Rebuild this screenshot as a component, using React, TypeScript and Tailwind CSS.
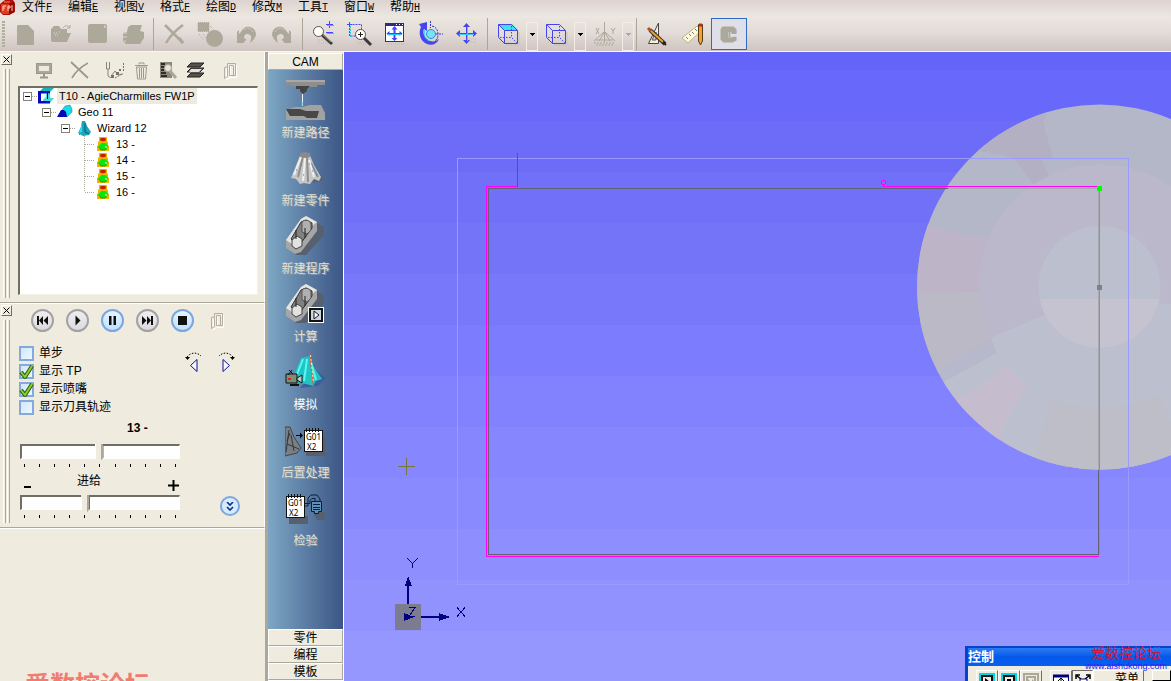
import React from "react";

type IconProps = { children: React.ReactNode };

const GREY = "#ada99a";

function ToolIcon({ children }: IconProps) {
  return (
    <svg width="36" height="32" viewBox="0 0 36 32" fill="none" aria-hidden="true">
      {children}
    </svg>
  );
}

function ToolButton({ label, active, children }: IconProps & { label: string; active?: boolean }) {
  return (
    <button
      type="button"
      aria-label={label}
      className={
        active
          ? "flex h-8 w-9 items-center justify-center border border-[#316ac5] bg-[#dedfe8]"
          : "flex h-8 w-9 items-center justify-center"
      }
    >
      <ToolIcon>{children}</ToolIcon>
    </button>
  );
}

function DropArrow({ label, disabled }: { label: string; disabled?: boolean }) {
  return (
    <button
      type="button"
      aria-label={label}
      className="flex h-[29px] w-3 items-center justify-center self-end border border-[#f3eee4] pb-1"
    >
      <svg width="5" height="3" viewBox="0 0 5 3" shapeRendering="crispEdges" aria-hidden="true">
        <path d="M0 0h5v1H4v1H3v1H2V2H1V1H0z" fill={disabled ? GREY : "#000"} />
      </svg>
    </button>
  );
}

function Separator() {
  return <div className="mx-0.5 h-8 w-px shrink-0 bg-[#aaa698]" />;
}

const menus = [
  ["文件", "F"],
  ["编辑", "E"],
  ["视图", "V"],
  ["格式", "F"],
  ["绘图", "D"],
  ["修改", "M"],
  ["工具", "T"],
  ["窗口", "W"],
  ["帮助", "H"],
];

function MenuBar() {
  return (
    <nav className="flex h-4 shrink-0 items-start overflow-hidden bg-linear-to-b from-[#ddd3d0] to-[#ebe6df]">
      <svg width="22" height="16" viewBox="0 0 22 16" className="shrink-0" aria-hidden="true">
        <path d="M0 4 5 0h8l2 3v9l-6 3H3L0 12z" fill="#b01208" />
        <path d="M1 4h8v10H3l-2-2z" fill="#e13a22" />
        <path d="M9 4l5-2v10l-5 3z" fill="#8c0a05" />
        <path d="M3 11V6h3M3 8h2M8 11V6h2v2H8M12 5v6" stroke="#ffd2c0" fill="none" />
        <path d="M4 2h6" stroke="#ff8060" />
      </svg>
      {menus.map(([name, key]) => (
        <button key={name} type="button" className="flex w-[46px] items-center text-xs leading-[15px]">
          {name}
          <span className="font-['Liberation_Mono'] text-[10px] underline">{key}</span>
        </button>
      ))}
    </nav>
  );
}

function CubeLines() {
  return (
    <>
      <path d="M8.500 6.500h13l6 6h-13zM8.500 6.500v13l6 6h13v-13M14.500 12.500v13" stroke="#4646e8" />
      <path d="M21.500 8v11M10 19.500h11M22 20l5 5" stroke="#4646e8" strokeDasharray="1.500 1.500" />
      <path d="M16 27h13V14" stroke="#c9c2c0" />
    </>
  );
}

function FourArrows() {
  return (
    <path
      d="M17.500 5l3.500 4h-3v6h6v-3l4 3.500-4 3.500v-3h-6v6h3l-3.500 4-3.500-4h3v-6h-6v3l-4-3.500 4-3.500v3h6V9h-3z"
      fill="#4646f0"
    />
  );
}

function ToolBar() {
  return (
    <div
      role="toolbar"
      className="flex h-9 shrink-0 items-center overflow-hidden border-b border-[#f8f6f0] bg-linear-to-b from-[#ece7e0] via-[#e2dbd8] to-[#cfc4c0]"
    >
      <div className="mr-0.5 ml-0.5 h-[26px] w-[3px] bg-[repeating-linear-gradient(to_bottom,#aeb09a_0_2px,transparent_2px_3px)]" />
      <ToolButton label="新建">
        <path d="M10 8l1-1h10l6 6v14H10z" fill={GREY} />
      </ToolButton>
      <ToolButton label="打开">
        <path d="M8 23V11l3-3h5l2 3h6v4h4l-4 9H10z" fill={GREY} />
        <path d="M20 10c2-3 5-3 7 0m0-3v3h-3" stroke={GREY} />
        <path d="M11 15h3m2-1h2m-6 3h3" stroke="#e0dad4" strokeDasharray="1 1" />
      </ToolButton>
      <ToolButton label="保存">
        <rect x="9" y="6" width="19" height="19" rx="2" fill={GREY} />
        <path d="M25 8h1v2" stroke="#e6e0da" />
      </ToolButton>
      <ToolButton label="打印">
        <path d="M13 9l3-2h11l-2 6 4 1v6l-4 6H11l-3-3v-8l4-1z" fill={GREY} />
        <path d="M8 15h4m-4 4h4m-3 4h2" stroke="#d8d2cb" />
      </ToolButton>
      <Separator />
      <ToolButton label="删除">
        <path d="M9 7l18 18M27 7C20 12 14 18 10 25" stroke={GREY} strokeWidth="2.500" />
        <path d="M23 20l4 5" stroke={GREY} strokeWidth="3" />
      </ToolButton>
      <ToolButton label="对象">
        <rect x="6" y="4.500" width="11" height="9" fill={GREY} stroke={GREY} strokeDasharray="1 1" />
        <circle cx="22.500" cy="20.500" r="8.500" fill={GREY} />
        <path d="M7 16l5 6M11 16l4 5M18 8l4 4" stroke={GREY} strokeDasharray="1 1" />
      </ToolButton>
      <ToolButton label="撤消">
        <path d="M9 14l2-2v4l2-2c2-4 5-6 9-5 4 1 6 4 6 8-1 3-3 6-6 8 1-4 2-6 0-8-3-2-6-1-6 3l2 1v1l-2 2v1H9z" fill={GREY} />
        <path d="M16 12c3-3 7-2 9 2M22 18l-2 7" stroke="#ddd6d0" strokeDasharray="1 1" />
      </ToolButton>
      <ToolButton label="重做">
        <path d="M27 14l-2-2v4l-2-2c-2-4-5-6-9-5-4 1-6 4-6 8 1 3 3 6 6 8-1-4-2-6 0-8 3-2 6-1 6 3l-2 1v1l2 2v1h7z" fill={GREY} />
        <path d="M20 12c-3-3-7-2-9 2M14 18l2 7" stroke="#ddd6d0" strokeDasharray="1 1" />
      </ToolButton>
      <Separator />
      <ToolButton label="缩放">
        <path d="M12 22h9M14 25h10" stroke="#bdb5b2" strokeDasharray="1 1" />
        <path d="M17 17l10 9" stroke="#3a3a3a" strokeWidth="3" />
        <path d="M17 16l9 8" stroke="#b08a60" />
        <circle cx="13.500" cy="13.500" r="5" fill="#fffff4" stroke="#555" />
        <path d="M21 6.500h7M24.500 3v7M21 14.500h7" stroke="#4646ff" />
        <path d="M22 7.500h7M22 15.500h7" stroke="#20c8ff" />
      </ToolButton>
      <ToolButton label="窗口缩放">
        <path d="M8.500 6.500h12v5M8.500 7v11h6" stroke="#4646ff" strokeDasharray="2 1" />
        <path d="M9.500 8v11" stroke="#20c8ff" strokeDasharray="2 1" />
        <path d="M6 6.500h5M8.500 4v5" stroke="#4646ff" />
        <path d="M23 20l7 7" stroke="#3a3a3a" strokeWidth="3" />
        <circle cx="19.500" cy="16.500" r="5" fill="#fffff4" stroke="#555" />
        <path d="M17 16.500h5M19.500 14v5" stroke="#222" />
        <path d="M15 24h9M18 26h8" stroke="#bdb5b2" strokeDasharray="1 1" />
      </ToolButton>
      <ToolButton label="全部显示">
        <rect x="8.500" y="5.500" width="18" height="18" fill="#fff" stroke="#2d2d88" />
        <path d="M8 6.500h19" stroke="#2d2d88" strokeWidth="3" />
        <path d="M19 6.500h7" stroke="#fff" strokeDasharray="1 2" />
        <path d="M17.500 8l3 3.500h-2V15h4v-2l3 2.500-3 2.500v-2h-4v4h2l-3 3-3-3h2v-4h-4v2l-3-2.500 3-2.500v2h4v-3.500h-2z" fill="#4646f0" />
        <path d="M10 16.500h15" stroke="#20c8ff" />
        <path d="M10 26h18" stroke="#bdb5b2" strokeDasharray="1 1" />
      </ToolButton>
      <ToolButton label="旋转">
        <path d="M6 6l8-2v9l-3-2c-2 4 1 10 6 12 4 1 6 0 9-2-2 5-7 7-12 5-7-3-9-11-6-17z" fill="#4646f0" />
        <circle cx="18" cy="16" r="4.500" fill="#70e6f6" stroke="#3a8ac8" />
        <path d="M17.500 3v7M23 16h7M19 8c4 1 6 4 6 8s-1 6-3 7" stroke="#3434d0" strokeDasharray="2 1" />
        <path d="M12 12c-2 4 0 9 4 11" stroke="#20c8ff" />
      </ToolButton>
      <ToolButton label="平移">
        <FourArrows />
        <path d="M10 16.500h15M18.500 9v14" stroke="#40c8f8" />
        <path d="M20 24h8M20 21h7" stroke="#bdb5b2" strokeDasharray="1 1" />
      </ToolButton>
      <Separator />
      <ToolButton label="着色视图">
        <path d="M8 6h14l6 6H14z" fill="#3fe0f4" />
        <CubeLines />
      </ToolButton>
      <DropArrow label="着色视图选项" />
      <ToolButton label="线框视图">
        <CubeLines />
      </ToolButton>
      <DropArrow label="线框视图选项" />
      <ToolButton label="坐标轴">
        <path d="M18.500 4v11M18 14l-10 9M19 14l10 9M18 15l-5 8M19 15l5 8M18.500 15v9M10 22h17" stroke={GREY} />
        <path d="M8 25h21M10 27h17" stroke={GREY} strokeDasharray="2 1" />
        <path d="M10 10l3 6M13 10l-3 6M25 10l2 3 2-3M27 13v3" stroke={GREY} />
      </ToolButton>
      <DropArrow label="坐标轴选项" disabled />
      <Separator />
      <ToolButton label="绘图工具">
        <path d="M19.500 5v20.500h-10z" fill="#f5f0da" stroke="#444" />
        <path d="M17 14v8h-4z" fill="#ddd5cf" stroke="#555" />
        <path d="M11 12l15 14" stroke="#333" strokeWidth="4" />
        <path d="M11 12l13 12" stroke="#f0a030" strokeWidth="2" />
        <path d="M9 10l3 3" stroke="#b05018" strokeWidth="3" />
        <path d="M24 24l3 3" stroke="#222" strokeWidth="2" />
      </ToolButton>
      <ToolButton label="测量">
        <path d="M7 20L22 8l5 4-14 13z" fill="#fffbd8" stroke="#b8b088" />
        <path d="M11 19l2 2M14 16l2 2M17 14l2 2M20 11l2 2" stroke="#777" />
        <path d="M23.500 6.500h4V23l-2 4-2-4z" fill="#f0a428" stroke="#5a3a18" />
        <path d="M24 7h3" stroke="#d02020" strokeWidth="3" />
      </ToolButton>
      <ToolButton label="线切割" active>
        <path d="M11 8h12l3 3v5h-5l-1-2h-3v6h3l2-1h4v4l-4 2H12l-3-3V11z" fill={GREY} />
        <path d="M18.500 13v8" stroke={GREY} strokeWidth="2" />
      </ToolButton>
    </div>
  );
}

function CloseBox({ label }: { label: string }) {
  return (
    <button
      type="button"
      aria-label={label}
      className="flex size-[11px] shrink-0 items-center justify-center border border-t-white border-r-[#716f64] border-b-[#716f64] border-l-white bg-[#efebdf]"
    >
      <svg width="7" height="7" viewBox="0 0 7 7" aria-hidden="true">
        <path d="M.5.5l6 6M6.500.5l-6 6" stroke="#000" />
      </svg>
    </button>
  );
}

function Dock({ label, children }: IconProps & { label: string }) {
  return (
    <section
      aria-label={label}
      className="flex shrink-0 border-r border-b border-r-white border-b-[#aca899] shadow-[0_1px_0_#fff]"
    >
      <div className="flex w-[13px] shrink-0 flex-col items-center gap-1 pt-0.5 pb-1">
        <CloseBox label="关闭" />
        <div className="flex flex-1 gap-px">
          <div className="w-[3px] border-r border-l border-l-white border-r-[#aca899]" />
          <div className="w-[3px] border-r border-l border-l-white border-r-[#aca899]" />
        </div>
      </div>
      <div className="min-w-0 flex-1">{children}</div>
    </section>
  );
}

function PanelIcon({ label, children }: IconProps & { label: string }) {
  return (
    <button type="button" aria-label={label} className="flex size-[22px] items-center justify-center">
      <svg width="22" height="22" viewBox="0 0 22 22" fill="none" aria-hidden="true">
        {children}
      </svg>
    </button>
  );
}

function DoorIcon() {
  return (
    <>
      <path d="M6.500 18.500V8.500l4-1v9zM10.500 16.500V4.500h6v12z" stroke="#fff" transform="translate(1 1)" />
      <path d="M5.500 18.500v-11l3-1v10zM8.500 6V3.500h8v12h-6M10.500 15.500v-10h4v10" stroke="#b3ae9f" />
    </>
  );
}

function Expander() {
  return (
    <button
      type="button"
      aria-label="折叠"
      className="flex size-[9px] shrink-0 items-center justify-center border border-[#848275] bg-white"
    >
      <span className="h-px w-[5px] bg-black" />
    </button>
  );
}

function TreeIcon({ kind }: { kind: "part" | "geo" | "wizard" | "op" }) {
  return (
    <svg width="16" height="16" viewBox="0 0 16 16" fill="none" className="shrink-0" aria-hidden="true">
      {kind === "part" && (
        <>
          <path d="M1 4l4-4h11l-4 4z" fill="#18b4bc" />
          <path d="M5 13V6h6v-1h1v5h4l-4 5H5z" fill="#40dce0" />
          <path d="M4 6h4v3l-4 4z" fill="#e8fcfc" />
          <path d="M0 3h12v2.500H3V13h9v2.500H0z" fill="#0808c0" />
          <path d="M9.500 5v6" stroke="#111" />
        </>
      )}
      {kind === "geo" && (
        <>
          <path d="M5 6l3-4 5-1 2 4v3l-5 5z" fill="#18dce4" stroke="#108098" strokeWidth=".5" />
          <path d="M0 13l4-7h3l2 2 1 5z" fill="#0808b8" />
        </>
      )}
      {kind === "wizard" && (
        <>
          <path d="M6 1h3l2 5 4 6-2 3-6 1-5-3 3-6z" fill="#18a8b8" />
          <path d="M6 2v10l-3 1 2-6z" fill="#20e4e8" />
          <path d="M9 3v9l4 2" stroke="#184a88" />
          <path d="M3 14h1m3 1h1" stroke="#e06020" strokeWidth="2" />
        </>
      )}
      {kind === "op" && (
        <>
          <path d="M4 1h8v4l1 1v3l1 1v5H2v-5l1-1V6l1-1z" fill="#f0b400" />
          <ellipse cx="8" cy="3.500" rx="3" ry="1.800" fill="#c82000" />
          <path d="M6 7h5l2 3-2 4H6l-3-3z" fill="#08e808" />
          <path d="M4 11l2 3h4l2-3" stroke="#109018" strokeWidth=".7" />
          <path d="M11 10v2" stroke="#fff" />
        </>
      )}
    </svg>
  );
}

const H_DOTS = "h-px shrink-0 bg-[repeating-linear-gradient(to_right,#aca899_0_1px,transparent_1px_2px)]";
const V_DOTS = "w-px shrink-0 bg-[repeating-linear-gradient(to_bottom,#aca899_0_1px,transparent_1px_2px)]";

function TreeView() {
  const operations = ["13 -", "14 -", "15 -", "16 -"];
  return (
    <ul className="ml-[5px] h-[209px] w-[240px] border border-t-2 border-l-2 border-t-[#716f64] border-r-[#f4f0e6] border-b-[#f4f0e6] border-l-[#716f64] bg-white pl-[3px] text-[11px] leading-4">
      <li className="flex h-4 items-center">
        <Expander />
        <span className={H_DOTS + " w-[6px]"} />
        <TreeIcon kind="part" />
        <span className="ml-[3px] bg-[#eeeadf] px-0.5">T10 - AgieCharmilles FW1P</span>
      </li>
      <li className="flex h-4 items-center pl-[19px]">
        <Expander />
        <span className={H_DOTS + " w-[6px]"} />
        <TreeIcon kind="geo" />
        <span className="ml-[3px] px-0.5">Geo 11</span>
      </li>
      <li className="flex h-4 items-center pl-[38px]">
        <Expander />
        <span className={H_DOTS + " w-[6px]"} />
        <TreeIcon kind="wizard" />
        <span className="ml-[3px] px-0.5">Wizard 12</span>
      </li>
      {operations.map((name, i) => (
        <li key={name} className="flex h-4 items-center pl-[61px]">
          <span className={V_DOTS + (i === operations.length - 1 ? " h-2 self-start" : " h-4")} />
          <span className={H_DOTS + " w-[10px]"} />
          <TreeIcon kind="op" />
          <span className="ml-[3px] px-0.5">{name}</span>
        </li>
      ))}
    </ul>
  );
}

function TreeDock() {
  return (
    <Dock label="结构">
      <div className="flex h-[34px] items-center pt-1 pl-5">
        <PanelIcon label="显示">
          <rect x="3.500" y="3.500" width="15" height="10" fill="#aca899" stroke="#9c998c" />
          <path d="M6 6h10v5H6z" fill="#eeeadf" />
          <path d="M11 14v3M7 17.500h8" stroke="#9c998c" strokeWidth="2" />
        </PanelIcon>
        <span className="w-[13px]" />
        <PanelIcon label="删除">
          <path d="M4 3l17 16M21 3C14 8 9 12 5 19" stroke="#fff" />
          <path d="M3 2l17 16M20 3C13 7 8 11 4 18" stroke="#9c998c" strokeWidth="1.800" />
        </PanelIcon>
        <span className="w-[13px]" />
        <PanelIcon label="路径">
          <path d="M3.500 2v7h3V2M5 9v7l3 2M8 16l4-5M12 11l3 4 5-1" stroke="#88857a" />
          <path d="M20.500 3v8M12 18l7-4" stroke="#77746a" strokeDasharray="2 1" />
          <path d="M8 15h3v3H8zM13 12h3v3h-3zM16 9h2v2h-2z" fill="#77746a" />
        </PanelIcon>
        <span className="w-1.5" />
        <PanelIcon label="回收站">
          <path d="M4 5.500h13M8 4.500V3h5v1.500M5.500 7h10l-1 12h-8zM8.500 8v10M10.500 8v10M12.500 8v10" stroke="#9c998c" />
        </PanelIcon>
        <span className="w-1" />
        <PanelIcon label="查找">
          <path d="M3 2h12v16H3z" fill="#8a877c" />
          <path d="M4 4h4M4 7h4M4 10h3M4 13h5M4 16h6" stroke="#111" strokeWidth="1.500" />
          <circle cx="11" cy="8" r="3.500" fill="#e8e5da" stroke="#aca899" />
          <path d="M13 11l6 7" stroke="#aca899" strokeWidth="3" />
        </PanelIcon>
        <span className="w-[5px]" />
        <PanelIcon label="图层">
          <path d="M7 3h13l-4 4H3zM7 8h13l-4 4H3zM7 13h13l-4 4H3z" fill="#55534c" stroke="#222" />
          <path d="M7 9h11l-3 3H5z" fill="#e8dde0" />
        </PanelIcon>
        <span className="w-[13px]" />
        <PanelIcon label="退出">
          <DoorIcon />
        </PanelIcon>
      </div>
      <TreeView />
      <div className="h-[7px]" />
    </Dock>
  );
}

function RoundButton({ label, blue, children }: IconProps & { label: string; blue?: boolean }) {
  return (
    <button
      type="button"
      aria-label={label}
      className={
        blue
          ? "flex size-[23px] items-center justify-center rounded-full border-2 border-[#7ba6e0] bg-linear-to-b from-[#e8f4ff] to-[#c0e2ff]"
          : "flex size-[23px] items-center justify-center rounded-full border-2 border-[#a3a1a5] bg-linear-to-b from-[#f0eff0] to-[#dcdadd]"
      }
    >
      <svg width="13" height="11" viewBox="0 0 13 11" fill="#111" aria-hidden="true">
        {children}
      </svg>
    </button>
  );
}

function Check({ id, label, checked }: { id: string; label: string; checked?: boolean }) {
  return (
    <div className="flex h-[18px] items-center gap-[5px]">
      <span className="relative size-[15px]">
        <input
          id={id}
          type="checkbox"
          defaultChecked={checked}
          className="peer block size-[15px] appearance-none border-2 border-[#84a9da] bg-linear-to-br from-[#cfe7fc] to-[#eef7ff]"
        />
        <svg
          width="15"
          height="15"
          viewBox="0 0 15 15"
          fill="none"
          className="pointer-events-none absolute inset-0 hidden peer-checked:block"
          aria-hidden="true"
        >
          <path d="M2 8l4 5L13 2" stroke="#2c5a10" strokeWidth="4" />
          <path d="M2 8l4 5L13 2" stroke="#86d22c" strokeWidth="2" />
        </svg>
      </span>
      <label htmlFor={id} className="text-xs leading-[18px]">
        {label}
      </label>
    </div>
  );
}

function Slider({ label, value }: { label: string; value: number }) {
  return (
    <div className="w-40">
      <input
        type="range"
        aria-label={label}
        min={0}
        max={100}
        defaultValue={value}
        className="block h-[15px] w-full appearance-none border border-t-2 border-l-2 border-t-[#716f64] border-r-white border-b-white border-l-[#716f64] bg-white [&::-webkit-slider-thumb]:h-[19px] [&::-webkit-slider-thumb]:w-[9px] [&::-webkit-slider-thumb]:translate-y-px [&::-webkit-slider-thumb]:appearance-none [&::-webkit-slider-thumb]:bg-[linear-gradient(to_right,#fff_0_1px,#efebdf_1px_6px,#aca899_6px_8px,#716f64_8px_9px)] [&::-webkit-slider-thumb]:[clip-path:polygon(0_0,100%_0,100%_75%,50%_100%,0_75%)]"
      />
      <div className="mt-[5px] flex justify-between pr-1 pl-1" aria-hidden="true">
        {Array.from({ length: 11 }, (_, i) => (
          <span key={i} className="h-[3px] w-px bg-black" />
        ))}
      </div>
    </div>
  );
}

function PlayDock() {
  return (
    <Dock label="模拟控制">
      <div className="flex items-center gap-3 pt-1.5 pl-[18px]">
        <RoundButton label="后退">
          <path d="M1 1h2v9H1zM3 5.500L7 1v9zM7.500 5.500L12 1v9z" />
        </RoundButton>
        <RoundButton label="播放">
          <path d="M4.500.5l5 5-5 5z" />
        </RoundButton>
        <RoundButton label="暂停" blue>
          <path d="M3 1h2.500v9H3zM7.500 1H10v9H7.500z" />
        </RoundButton>
        <RoundButton label="前进">
          <path d="M10 1h2v9h-2zM10 5.500L6 1v9zM5.500 5.500L1 1v9z" />
        </RoundButton>
        <RoundButton label="停止" blue>
          <path d="M2 1h9v9H2z" />
        </RoundButton>
        <PanelIcon label="退出">
          <DoorIcon />
        </PanelIcon>
      </div>
      <div className="flex pt-3 pl-1.5">
        <div className="w-[165px]">
          <Check id="single-step" label="单步" />
          <Check id="show-tp" label="显示 TP" checked />
          <Check id="show-nozzle" label="显示喷嘴" checked />
          <Check id="show-track" label="显示刀具轨迹" />
        </div>
        <div className="flex items-start gap-4 pt-2">
          <button type="button" aria-label="上一步">
            <svg width="18" height="21" viewBox="0 0 18 21" fill="none" aria-hidden="true">
              <path d="M3 5c4-5 10-5 14-1" stroke="#000" strokeDasharray="1.500 1.500" />
              <path d="M1 5h5L3.500 8z" fill="#000" />
              <path d="M13 7.500v12L6.500 13.500z" fill="#f4f8ff" stroke="#101090" />
            </svg>
          </button>
          <button type="button" aria-label="下一步">
            <svg width="18" height="21" viewBox="0 0 18 21" fill="none" aria-hidden="true">
              <path d="M15 5C11 0 5 0 1 4" stroke="#000" strokeDasharray="1.500 1.500" />
              <path d="M17 5h-5l2.500 3z" fill="#000" />
              <path d="M5 7.500v12l6.500-6z" fill="#f4f8ff" stroke="#101090" />
            </svg>
          </button>
        </div>
      </div>
      <div className="flex items-end justify-between pr-6 pb-[9px] pl-[7px]">
        <div className="w-40">
          <p className="pt-1 pl-[107px] text-xs leading-4 font-bold">13 -</p>
          <div className="pt-2">
            <Slider label="位置" value={49} />
          </div>
          <div className="flex h-7 items-center pr-px pl-1">
            <span className="mt-3 h-0.5 w-[7px] bg-black" />
            <span className="ml-[46px] text-xs">进给</span>
            <svg width="11" height="11" viewBox="0 0 11 11" className="mt-2 ml-auto" role="img" aria-label="加快">
              <path d="M0 4.500h4.500V0h2v4.500H11v2H6.500V11h-2V6.500H0z" />
            </svg>
          </div>
          <Slider label="进给" value={40} />
        </div>
        <button
          type="button"
          aria-label="展开"
          className="mb-0.5 flex size-5 items-center justify-center rounded-full border-2 border-[#7ba6e0] bg-[#d5ebfd]"
        >
          <svg width="8" height="9" viewBox="0 0 8 9" fill="none" aria-hidden="true">
            <path d="M1 0l3 3 3-3M1 5l3 3 3-3" stroke="#103088" strokeWidth="1.600" />
          </svg>
        </button>
      </div>
    </Dock>
  );
}

function Block() {
  return (
    <>
      <path d="M3 32l8 7h10l18-20v-8l-9-5z" fill="#56606e" />
      <path d="M1 24L16 3l5-3 11 6v9L16 36l-6 2-9-6z" fill="#a6a6a6" />
      <path d="M1 24L16 3l5-3 11 6-5 4L14 29l-4 1z" fill="#e4e4e4" />
      <path d="M6 23L16 6l5-2 6 3v5L16 27l-4 1z" fill="#808080" stroke="#333" />
      <path d="M17 6c3-3 8-2 9 2v6l-4 4-5-2z" fill="#b0b0b0" stroke="#555" />
      <path d="M7 24l5-4 5 3v7l-6 3-4-3z" fill="#e2e2e2" stroke="#444" />
      <path d="M11 14v9M20 12v10" stroke="#222" />
    </>
  );
}

function NoteCard() {
  return (
    <>
      <rect x=".5" y="2.500" width="18" height="21" fill="#fff" stroke="#111" />
      <path d="M2.500 0v4M5.500 0v4M8.500 0v4M11.500 0v4M14.500 0v4" stroke="#111" />
      <text x="2" y="12" className="fill-black font-sans text-[8px]">
        G01
      </text>
      <text x="3" y="22" className="fill-black font-sans text-[8px]">
        X2
      </text>
    </>
  );
}

const camItems: { name: string; enabled?: boolean; art: React.ReactNode }[] = [
  {
    name: "新建路径",
    art: (
      <>
        <path d="M1 0h39v5h-8v2H12L1 5z" fill="#8e8e8e" />
        <path d="M1 0h39v2H1z" fill="#a8a8a8" />
        <path d="M11 6h14l-3 3v2l-4 3-3-3v-2h-4z" fill="#444" />
        <path d="M17.500 14v12" stroke="#f4f4ff" />
        <path d="M1 30l9-3h7l8-2h11l4 8v7H1z" fill="#a2a2a2" />
        <path d="M1 29h14l6 2h13l-2 7H22l-3-2H5z" fill="#484848" />
        <path d="M17 22v4" stroke="#20c8e8" />
      </>
    ),
  },
  {
    name: "新建零件",
    art: (
      <>
        <path d="M7 29l10 5 6 1 15-2-1-7-12-3z" fill="#5a6478" />
        <path d="M16 5h8l5 12 7 12-2 4-5-2-4 5-6-1-4 1-4-5-5-1z" fill="#c6c6c6" />
        <path d="M18 8l-5 21M22 9l1 25M26 15l7 14" stroke="#8e8e8e" strokeWidth="2" />
        <path d="M16 9l-7 18M20 10l-2 23M24 12l5 17" stroke="#f0f0f0" strokeWidth="2" />
        <path d="M15 5l5-1 5 1v4l-5 1-5-1z" fill="#8a8a8a" />
        <path d="M11 22h1M16 17h1M18 27h1M27 23h1M31 27h1M24 16h1" stroke="#3a78c8" />
      </>
    ),
  },
  { name: "新建程序", art: <Block /> },
  {
    name: "计算",
    art: (
      <>
        <Block />
        <rect x="23.500" y="23.500" width="15" height="15" fill="#d6d3ca" stroke="#fff" />
        <rect x="25" y="25" width="12" height="12" fill="#c9d3e2" stroke="#111" strokeWidth="2" />
        <path d="M29 27l5 4-5 4z" fill="#fff" stroke="#111" />
      </>
    ),
  },
  {
    name: "模拟",
    enabled: true,
    art: (
      <>
        <path d="M15 36l18-2 8-8-10-8z" fill="#3d5f9c" />
        <path d="M16 6l9-2 3 10 9 13-6 2-3 5-7-2-9-1-5-3z" fill="#20c4c4" />
        <path d="M18 7l-7 18M22 7l-3 22M26 10l5 18" stroke="#58f8f0" strokeWidth="2" />
        <path d="M24.500 0l4 35" stroke="#f05028" />
        <path d="M25.500 3l3 28" stroke="#ffe8b0" strokeDasharray="2 2" />
        <path d="M1 22h11v9H1z" fill="#78907c" stroke="#111" />
        <path d="M12 26l5-3v8l-5-3zM3 23l4-5M4 18l4 4" stroke="#111" fill="#c8c8c8" />
        <path d="M3 27h3" stroke="#e02020" strokeWidth="2" />
        <path d="M5 33h9" stroke="#111" strokeWidth="2" />
      </>
    ),
  },
  {
    name: "后置处理",
    art: (
      <>
        <path d="M0 7h5l4 10 7 11-4 5-12 3z" fill="#7b7e83" stroke="#444" />
        <path d="M4 10l-3 22M6 15l3 16M2 24l12 5M5 13l-3 8" stroke="#34383e" />
        <path d="M11 15.500h5" stroke="#000" />
        <path d="M15 12.500l3 3-3 3z" fill="#000" />
        <path d="M21 34h18V17" stroke="#5a5f68" strokeWidth="4" />
        <g transform="translate(19 8)">
          <NoteCard />
        </g>
      </>
    ),
  },
  {
    name: "检验",
    art: (
      <>
        <path d="M4 28h19v8H4zM28 24h12v8h-8z" fill="#56606e" />
        <g transform="translate(1 6)">
          <NoteCard />
        </g>
        <path d="M20 18h3v-8l3-3h6l3 4v4M20 15.500h5v-3l2-2h3v4" stroke="#0a2040" />
        <path d="M26.500 13.500h10v10h-3v2h-4v-2h-3z" fill="#5f91b8" stroke="#0a1c38" />
        <path d="M28 16.500h7M28 19.500h7M28 21.500h7" stroke="#0a1c38" />
      </>
    ),
  },
];

function CamBar() {
  const tab =
    "h-[17px] w-full shrink-0 border border-t-white border-r-[#aca899] border-b-[#aca899] border-l-white bg-[#efebdf] pt-px text-xs leading-[14px]";
  return (
    <aside className="flex w-[77px] shrink-0 flex-col border-r border-l border-r-white border-l-[#aca899] pt-px">
      <button type="button" className={tab}>
        CAM
      </button>
      <div className="flex-1 overflow-hidden bg-linear-to-r from-[#7ea7c4] to-[#3c5585] pt-[10px]">
        {camItems.map((item) => (
          <button
            key={item.name}
            type="button"
            className="flex h-[68px] w-full flex-col items-center text-xs leading-4 whitespace-nowrap"
          >
            <svg width="41" height="41" viewBox="0 0 41 41" fill="none" className="mb-1 shrink-0" aria-hidden="true">
              {item.art}
            </svg>
            <span className={item.enabled ? "text-white" : "text-[#e4e1d4] [text-shadow:1px_1px_0_#8d98a0]"}>
              {item.name}
            </span>
          </button>
        ))}
      </div>
      {["零件", "编程", "模板"].map((name) => (
        <button key={name} type="button" className={tab}>
          {name}
        </button>
      ))}
      <div className="h-px bg-white" />
    </aside>
  );
}

const bandColors = [
  "#6464f8", "#6868fa", "#6c6cf8", "#7070f8", "#7474f8", "#7878fa", "#7c7cfe",
  "#8282ff", "#8686ff", "#8a8aff", "#8e8eff", "#9292ff", "#9696ff", "#9a9aff",
];

function Scene() {
  return (
    <svg className="absolute inset-0 h-full w-full" fill="none" shapeRendering="crispEdges" role="img" aria-label="视图">
      {bandColors.map((color, i) => (
        <rect key={color} x="0" y={i * 51 - 33} width="100%" height="52" fill={color} />
      ))}
      <g transform="translate(-344 -52)">
        <clipPath id="disc">
          <circle cx="1099.500" cy="287" r="182.500" />
        </clipPath>
        <clipPath id="core">
          <circle cx="1099.500" cy="287" r="61" />
        </clipPath>
        <g clipPath="url(#disc)">
          <path d="M900 90h400v400H900z" fill="#b4b7c7" />
          <path d="M975 150l60-40h14l-6 12 10 36h-12l8 18-15 9-20-27z" fill="#b3b0c4" />
          <path d="M910 220l22 6 29 9 29 2-12 54-70 2z" fill="#bdb4c8" />
          <path d="M910 292h70l11 46-60 40z" fill="#bcb9c6" />
          <path d="M930 374l61-36 6 15-55 40z" fill="#b8b8cc" />
          <path d="M940 384l57-31-6-15 110-60h200v210H980z" fill="#bbbfce" />
          <path d="M955 400l35-20 16-15 21 22-25 40 2 4-8 14z" fill="#c5bccd" />
          <path d="M1034 460l17-61c30 11 74 14 109-6l30 80h-140z" fill="#bdbec7" />
          <path d="M990 338a122 122 0 1 1 231-32l-60-2-10-10-106 21z" fill="#bbb8cc" />
        </g>
        <g clipPath="url(#core)">
          <path d="M1030 220h140v80h-140z" fill="#bbbfce" />
          <path d="M1030 299h140v60h-140z" fill="#c6c3d0" />
        </g>
        <rect x="457.500" y="158.500" width="671" height="426" stroke="#9a9aff" />
        <path d="M517.500 153v34" stroke="#5050b0" />
        <path d="M948 188.500h151M1098.500 190v280" stroke="#a9a9ae" />
        <path d="M948 188.500H488.500v366h610V470" stroke="#62626e" />
        <path d="M517 186.500h-30.500v370h612" stroke="#ff00ff" />
        <path d="M883.500 184v2.500H1099" stroke="#ff00ff" />
        <circle cx="883.500" cy="182.500" r="2" stroke="#ff00ff" />
        <path d="M1099.500 190v365" stroke="#10e820" />
        <path d="M1097 186h5v5h-5z" fill="#00ff00" />
        <path d="M1097 285h5v5h-5z" fill="#808088" />
        <path d="M398 466.500h17M406.500 458v17" stroke="#76763c" />
        <path d="M395 604h26v26h-26z" fill="#7c7c90" />
        <path d="M408 604v-22M421 617h20" stroke="#000080" strokeWidth="2" />
        <path d="M408 576l4 10h-7zM450 617l-11 4v-8zM414 617l-10 4v-8z" fill="#000080" />
        <path d="M407.500 558.500l5 5 5-5M412.500 563v5M457 607.500l8 9M465 607.500l-8 9M409 607.500h6l-6 9h6" stroke="#000080" />
      </g>
    </svg>
  );
}

function ControlButton({ label, pressed, children }: IconProps & { label: string; pressed?: boolean }) {
  return (
    <button
      type="button"
      aria-label={label}
      className={
        pressed
          ? "flex h-[22px] w-[23px] justify-center border border-t-[#716f64] border-r-white border-l-[#716f64] bg-[#f5f2ea] pt-0.5"
          : "flex h-[22px] w-[23px] justify-center border border-t-white border-r-[#716f64] border-l-white bg-[#efebdf] pt-0.5"
      }
    >
      <svg width="16" height="14" viewBox="0 0 16 14" fill="none" aria-hidden="true">
        {children}
      </svg>
    </button>
  );
}

function ControlWindow() {
  return (
    <section
      aria-label="控制"
      className="absolute right-0 bottom-0 h-[35px] w-[206px] border-t-2 border-l-[3px] border-[#0842c8] bg-[#efebdf]"
    >
      <div className="flex h-[18px] items-center bg-linear-to-b from-[#2a7cf4] via-[#0558e8] to-[#0460f4]">
        <h2 className="text-[13px] leading-[18px] font-bold text-white">控制</h2>
      </div>
      <div className="absolute -top-1 right-1 flex flex-col items-center">
        <span className="text-sm leading-[18px] whitespace-nowrap text-[#cc1840]">爱数控论坛</span>
        <span className="text-[9px] leading-[9px] whitespace-nowrap text-[#2424f4]">www.aishukong.com</span>
      </div>
      <div className="flex h-[15px] overflow-hidden pt-1 pl-2">
        <ControlButton label="播放">
          <path d="M1 14V1h14v13" stroke="#00d8e8" strokeWidth="2" />
          <path d="M3 14V3h10v11" stroke="#111" strokeWidth="2" />
          <path d="M6 5l5 4-5 4z" fill="#000" />
        </ControlButton>
        <ControlButton label="停止">
          <path d="M1 14V1h14v13" stroke="#00d8e8" strokeWidth="2" />
          <path d="M3 14V3h10v11" stroke="#111" strokeWidth="2" />
          <path d="M6 6h4v5H6z" fill="#000" />
        </ControlButton>
        <ControlButton label="快进">
          <path d="M1 14V1h14v13M4 14V4h8v10" stroke="#aca899" strokeWidth="2" />
          <path d="M5 6l3 3-3 3zM9 6l3 3-3 3z" fill="#aca899" />
        </ControlButton>
        <span className="w-2 shrink-0" />
        <ControlButton label="窗口">
          <path d="M.5 14V2.500h15V14" fill="#fff" stroke="#00007c" />
          <path d="M0 3h16" stroke="#00007c" strokeWidth="3" />
          <path d="M8 5v9M5 8l3-3 3 3M3 10l-2 2M13 10l2 2" stroke="#000" />
        </ControlButton>
        <ControlButton label="全屏" pressed>
          <path d="M1 6V2h4M15 6V2h-4M2 3l4 3M14 3l-4 3M2 13l3-2M14 13l-3-2" stroke="#000" strokeWidth="1.500" />
          <path d="M5 6h7v5H5z" fill="#fff" stroke="#00007c" />
        </ControlButton>
        <button
          type="button"
          className="flex h-[22px] w-[53px] justify-end border border-t-white border-r-[#716f64] border-l-white pr-1 text-xs leading-4"
        >
          菜单
        </button>
        <span className="ml-2 w-5 border border-t-white border-l-white" />
      </div>
    </section>
  );
}

export default function App() {
  return (
    <div className="flex h-screen flex-col overflow-hidden bg-[#efebdf] font-['Liberation_Sans','Noto_Sans_CJK_SC',sans-serif] text-black">
      <MenuBar />
      <ToolBar />
      <main className="flex min-h-0 flex-1">
        <div className="flex w-[267px] shrink-0 flex-col overflow-hidden border-r-2 border-[#aca899]">
          <TreeDock />
          <PlayDock />
          <div className="flex min-h-0 flex-1 items-end overflow-hidden">
            <p className="-mb-5 pl-[25px] text-[25px] leading-8 font-bold whitespace-nowrap text-[#f27b70]">爱数控论坛</p>
          </div>
        </div>
        <CamBar />
        <div className="relative min-w-0 flex-1 overflow-hidden bg-[#9494ff]">
          <Scene />
          <ControlWindow />
        </div>
      </main>
    </div>
  );
}
